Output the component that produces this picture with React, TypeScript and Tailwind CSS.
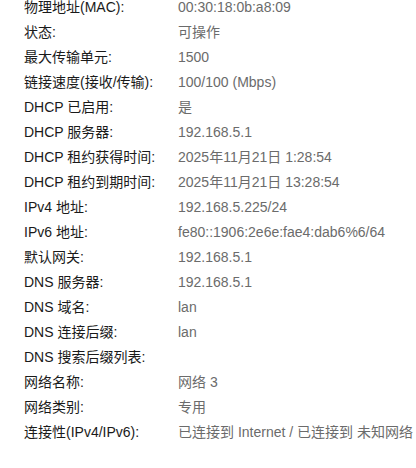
import React from "react";

const rows: [string, string][] = [
  ["物理地址(MAC):", "00:30:18:0b:a8:09"],
  ["状态:", "可操作"],
  ["最大传输单元:", "1500"],
  ["链接速度(接收/传输):", "100/100 (Mbps)"],
  ["DHCP 已启用:", "是"],
  ["DHCP 服务器:", "192.168.5.1"],
  ["DHCP 租约获得时间:", "2025年11月21日 1:28:54"],
  ["DHCP 租约到期时间:", "2025年11月21日 13:28:54"],
  ["IPv4 地址:", "192.168.5.225/24"],
  ["IPv6 地址:", "fe80::1906:2e6e:fae4:dab6%6/64"],
  ["默认网关:", "192.168.5.1"],
  ["DNS 服务器:", "192.168.5.1"],
  ["DNS 域名:", "lan"],
  ["DNS 连接后缀:", "lan"],
  ["DNS 搜索后缀列表:", ""],
  ["网络名称:", "网络 3"],
  ["网络类别:", "专用"],
  ["连接性(IPv4/IPv6):", "已连接到 Internet / 已连接到 未知网络"],
];

export default function App() {
  return (
    <div
      className="w-[416px] h-[468px] overflow-hidden bg-white"
      style={{ fontFamily: '"Liberation Sans", "Noto Sans CJK SC", sans-serif' }}
    >
      <div className="-mt-[5px] pl-[24px] flex flex-col">
        {rows.map(([k, v], i) => (
          <div key={i} className="flex h-[25px] items-center text-[14px] leading-[25px] whitespace-nowrap">
            <div className="w-[154px] shrink-0 text-[#1a1a1a]">{k}</div>
            <div className="text-[#6b6b6b]">{v}</div>
          </div>
        ))}
      </div>
    </div>
  );
}
